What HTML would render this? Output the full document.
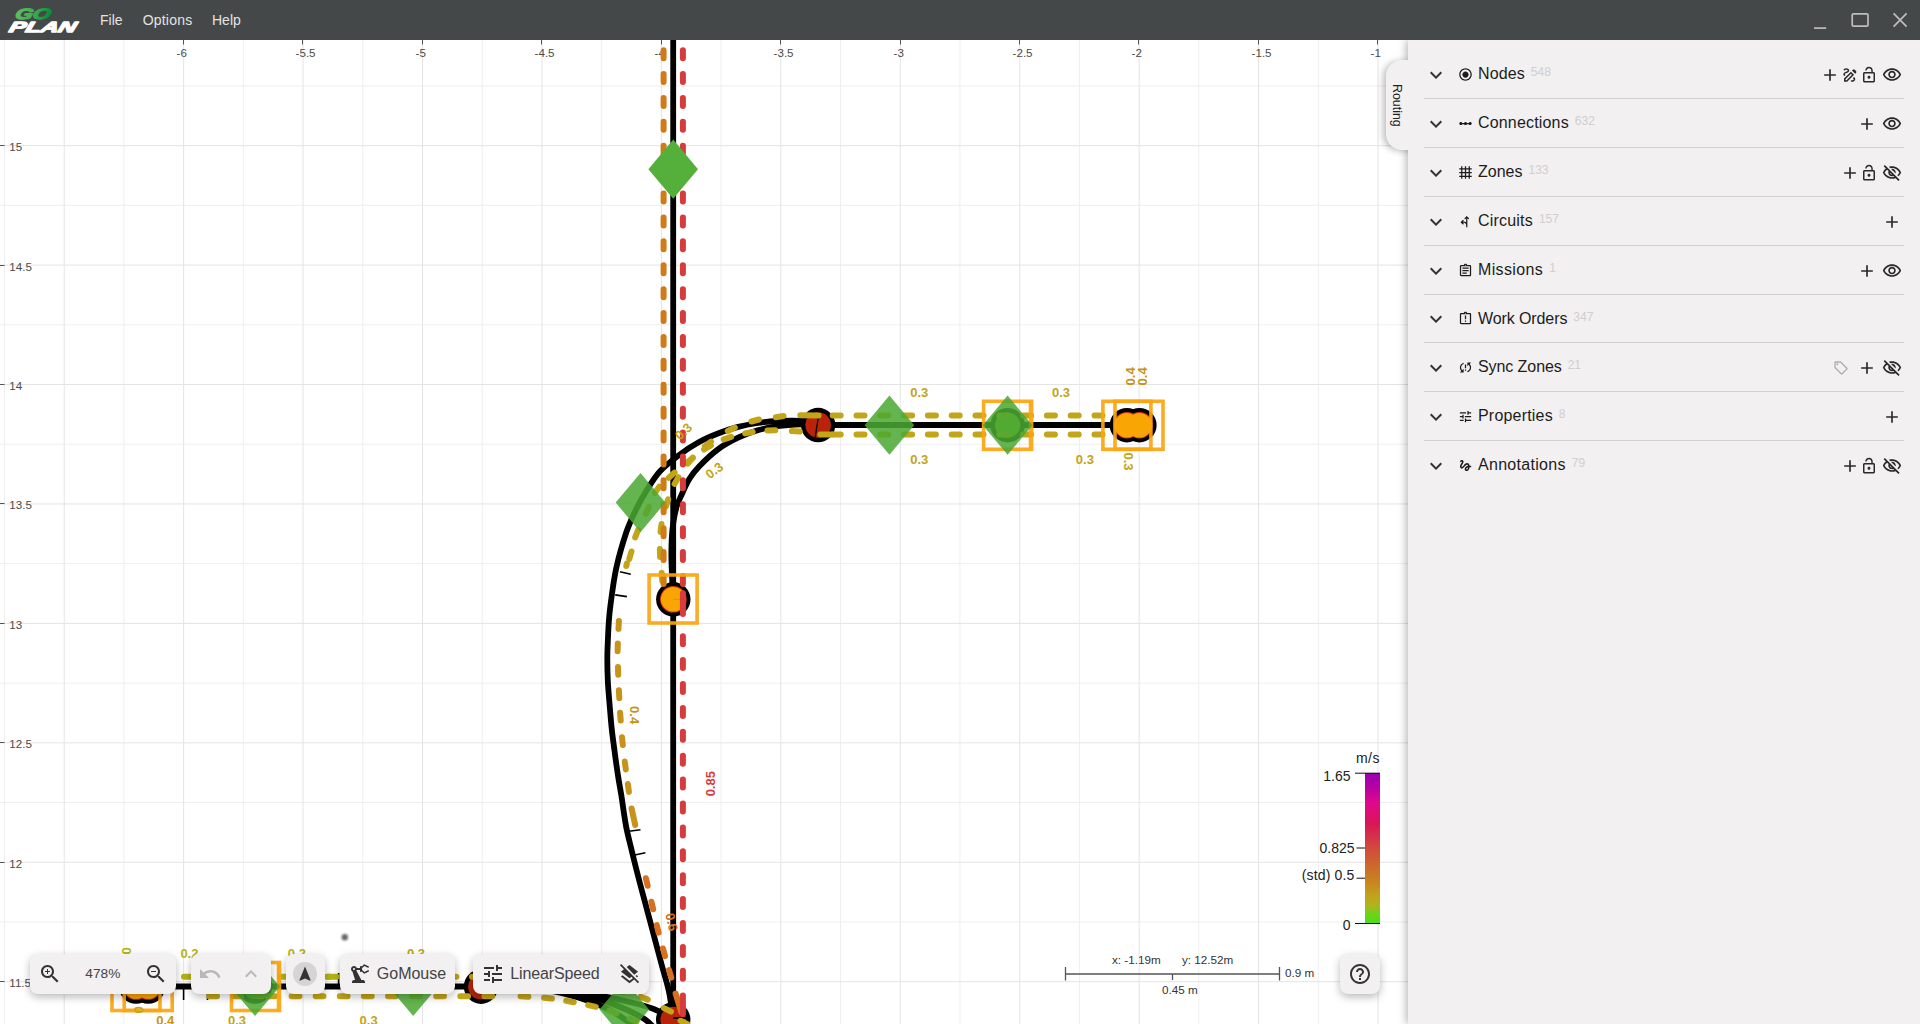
<!DOCTYPE html>
<html lang="en">
<head>
<meta charset="utf-8">
<title>GoPlan</title>
<style>
*{box-sizing:border-box;margin:0;padding:0}
html,body{width:1920px;height:1024px;overflow:hidden;background:#fff;font-family:"Liberation Sans",sans-serif;}
#titlebar{position:absolute;left:0;top:0;width:1920px;height:40px;background:#444849;z-index:20}
#titlebar .menu{position:absolute;top:0;height:40px;line-height:40px;color:#e3e3e3;font-size:14px}
#logo{position:absolute;left:0;top:0;width:90px;height:40px}
#canvas{position:absolute;left:0;top:40px;width:1408px;height:984px;overflow:hidden;background:#fff}
#canvas svg{position:absolute;left:0;top:-40px}
#panel{position:absolute;left:1408px;top:40px;width:512px;height:984px;background:#f2f0f1;box-shadow:-2px 0 8px rgba(0,0,0,.28);z-index:10}
#tabwrap{position:absolute;left:1366px;top:40px;width:42px;height:130px;overflow:hidden;z-index:12;clip-path:inset(0 0 0 0)}
#tab{position:absolute;left:20px;top:20px;width:30px;height:90px;background:#f2f0f1;border-radius:16px 0 0 16px;box-shadow:-3px 1px 6px rgba(0,0,0,.25)}
#tab span{position:absolute;left:-0.5px;top:20px;width:22px;height:50px;writing-mode:vertical-rl;font-size:12.4px;color:#222;line-height:22px;text-align:center}
.row{position:absolute;left:16px;width:480px;height:49px;border-bottom:1px solid #d2d0d1}
.row .t{position:absolute;left:54px;top:0;font-size:16px;line-height:48px;color:#1c1c1c;white-space:nowrap}
.row .t sup{font-size:12px;color:#d0cecf;margin-left:6px;vertical-align:baseline;position:relative;top:-3px;letter-spacing:0}
.row svg{position:absolute}
.pill{position:absolute;top:954px;height:40px;background:#f2f0f1;border-radius:8px;box-shadow:0 3px 8px rgba(0,0,0,.28);z-index:8}
.pill span{position:absolute;top:0;line-height:40px;font-size:16px;color:#444;white-space:nowrap}
.pill svg{position:absolute}
</style>
</head>
<body>
<div id="canvas">
<svg id="map" width="1408" height="1024" viewBox="0 0 1408 1024">
<g id="grid"><path d="M4.47 40V1024M123.91 40V1024M243.34 40V1024M362.78 40V1024M482.22 40V1024M601.66 40V1024M721.09 40V1024M840.53 40V1024M959.97 40V1024M1079.41 40V1024M1198.84 40V1024M1318.28 40V1024M0 85.93H1408M0 205.37H1408M0 324.81H1408M0 444.24H1408M0 563.68H1408M0 683.12H1408M0 802.56H1408M0 921.99H1408" stroke="#efefef" stroke-width="1" fill="none"/>
<path d="M64.19 40V1024M183.62 40V1024M303.06 40V1024M422.5 40V1024M541.94 40V1024M661.38 40V1024M780.81 40V1024M900.25 40V1024M1019.69 40V1024M1139.12 40V1024M1258.56 40V1024M1378.0 40V1024M0 145.65H1408M0 265.09H1408M0 384.52H1408M0 503.96H1408M0 623.4H1408M0 742.84H1408M0 862.27H1408M0 981.71H1408" stroke="#e4e4e4" stroke-width="1" fill="none"/></g>
<g id="axes"><path d="M183.5 40V44.5M302.5 40V44.5M422.5 40V44.5M541.5 40V44.5M661.5 40V44.5M780.5 40V44.5M900.5 40V44.5M1019.5 40V44.5M1138.5 40V44.5M1258.5 40V44.5M1377.5 40V44.5M0 145.5H4.5M0 265.5H4.5M0 384.5H4.5M0 503.5H4.5M0 623.5H4.5M0 742.5H4.5M0 862.5H4.5M0 981.5H4.5" stroke="#555" stroke-width="1" fill="none"/>
<g font-family="&quot;Liberation Sans&quot;,sans-serif" font-size="11.6" fill="#4a4a4a"><text x="176.6" y="56.8">-6</text><text x="295.6" y="56.8">-5.5</text><text x="415.6" y="56.8">-5</text><text x="534.6" y="56.8">-4.5</text><text x="654.6" y="56.8">-4</text><text x="773.6" y="56.8">-3.5</text><text x="893.6" y="56.8">-3</text><text x="1012.6" y="56.8">-2.5</text><text x="1131.6" y="56.8">-2</text><text x="1251.6" y="56.8">-1.5</text><text x="1370.6" y="56.8">-1</text><text x="9.3" y="150.7">15</text><text x="9.3" y="270.7">14.5</text><text x="9.3" y="389.7">14</text><text x="9.3" y="508.7">13.5</text><text x="9.3" y="628.7">13</text><text x="9.3" y="747.7">12.5</text><text x="9.3" y="867.7">12</text><text x="9.3" y="986.7">11.5</text></g></g>
<g id="routes"><g fill="none" stroke="#000" stroke-width="5.8" stroke-linecap="round" stroke-linejoin="round">
<path d="M673.2 30V1019"/>
<path d="M818 425H1128"/>
<path d="M818.1 425.1C815.4 424.4 808.4 421.7 801.6 421.0C794.8 420.3 784.5 420.7 777.2 421.0C769.9 421.3 764.2 422.0 757.7 423.0C751.2 424.0 744.6 425.2 738.1 426.9C731.6 428.6 725.1 430.7 718.6 433.2C712.1 435.7 705.6 438.4 699.1 442.0C692.6 445.6 686.0 449.8 679.5 454.7C673.0 459.6 665.5 465.3 660.0 471.3C654.5 477.3 650.3 484.6 646.4 490.8C642.5 497.0 639.7 502.2 636.6 508.4C633.5 514.6 630.5 521.1 627.9 527.9C625.3 534.7 623.0 542.6 621.0 549.4C619.0 556.2 617.6 561.8 616.1 568.9C614.6 576.0 613.3 584.5 612.2 592.3C611.1 600.1 610.0 607.9 609.3 615.8C608.6 623.7 608.2 632.3 607.9 639.5C607.6 646.7 607.3 651.8 607.3 659.0C607.3 666.2 607.5 674.7 607.9 682.5C608.3 690.3 609.1 698.1 609.7 705.9C610.4 713.7 610.9 721.6 611.8 729.4C612.6 737.2 613.8 745.0 614.8 752.8C615.8 760.6 617.0 769.1 618.1 776.2C619.2 783.4 620.1 787.6 621.4 795.8C622.7 804.0 624.2 816.2 625.9 825.4C627.6 834.6 629.7 842.0 631.8 850.8C633.9 859.6 636.2 868.7 638.6 878.1C641.0 887.5 643.8 897.6 646.4 907.4C649.0 917.2 651.6 926.9 654.2 936.7C656.8 946.5 659.5 956.9 662.0 966.0C664.5 975.1 667.0 982.5 668.9 991.4C670.8 1000.3 672.5 1014.8 673.2 1019.5"/>
<path d="M818.1 425.1C815.4 424.9 808.4 424.2 801.6 424.4C794.8 424.6 784.5 425.2 777.2 426.2C769.9 427.2 764.2 428.4 757.7 430.3C751.2 432.2 744.6 434.5 738.1 437.6C731.6 440.7 725.1 444.0 718.6 448.8C712.1 453.6 704.0 461.3 699.1 466.4C694.2 471.4 692.2 474.3 689.3 479.1C686.4 483.9 683.6 490.4 681.5 495.0C679.4 499.6 678.1 501.9 676.7 506.4C675.4 510.9 674.2 516.8 673.4 522.0C672.6 527.2 672.1 531.8 671.8 537.7C671.5 543.6 671.3 550.2 671.4 557.2C671.5 564.2 671.9 573.0 672.2 580.0C672.5 587.0 673.1 596.1 673.3 599.3"/>
<path d="M136 986.5H520C560 987 590 993 625 1001S660 1012 673 1019.5"/>
<path d="M520 986.5C565 988 600 998 625 1009S650 1024 660 1034"/>
<path d="M520 986.5C560 989 600 1003 620 1016S632 1030 640 1040"/>
</g>
<path d="M620 571.8L630.8 574.2M615.2 594.9L626.9 596.6M628.8 831.25L640.5 829.7M633.7 855.3L645.4 852.7M183.6 986V1000M207.5 986V1000M338.6 973V987" stroke="#000" stroke-width="1.6" fill="none"/>
<circle cx="818.15" cy="425.05" r="17.2" fill="#000"/><circle cx="818.15" cy="425.05" r="12.8" fill="#b9230a"/><path d="M819.2 411.5L815 438.5" stroke="#000" stroke-width="1.3"/>
<circle cx="1126.9" cy="425.2" r="17.2" fill="#000"/><circle cx="1139.4" cy="425.2" r="17.2" fill="#000"/><circle cx="1126.9" cy="425.2" r="13.3" fill="#e0360c"/><circle cx="1139.4" cy="425.2" r="13.3" fill="#e0360c"/><circle cx="1126.9" cy="425.2" r="12.3" fill="#f9a504"/><circle cx="1139.4" cy="425.2" r="12.3" fill="#f9a504"/>
<circle cx="673.3" cy="599.3" r="17.2" fill="#000"/><circle cx="673.3" cy="599.3" r="13.3" fill="#e0360c"/><circle cx="673.3" cy="599.3" r="12.3" fill="#f9a504"/><path d="M673.5 599.3H684" stroke="#d9961e" stroke-width="1.2"/>
<circle cx="673.2" cy="1019.5" r="17.2" fill="#000"/><circle cx="673.2" cy="1019.5" r="12.8" fill="#b9230a"/><path d="M673.3 1018H686.5" stroke="#000" stroke-width="2"/>
<circle cx="481" cy="986.7" r="17.2" fill="#000"/><circle cx="481" cy="986.7" r="12.8" fill="#b9230a"/>
<circle cx="136" cy="986.5" r="17.2" fill="#000"/><circle cx="148.2" cy="986.5" r="17.2" fill="#000"/><circle cx="136" cy="986.5" r="13.3" fill="#e0360c"/><circle cx="148.2" cy="986.5" r="13.3" fill="#e0360c"/><circle cx="136" cy="986.5" r="12.3" fill="#f9a504"/><circle cx="148.2" cy="986.5" r="12.3" fill="#f9a504"/>
<circle cx="1007.6" cy="425.2" r="17.2" fill="#000"/><circle cx="1007.6" cy="425.2" r="12.6" fill="#78bd3c"/>
<circle cx="255" cy="986.5" r="17.2" fill="#000"/><circle cx="255" cy="986.5" r="12.6" fill="#78bd3c"/>
<path d="M783.6 416.0L775.8 417.2M759.0 419.5L751.4 421.5M734.8 427.6L727.8 431.0M711.0 441.6L704.8 446.4M692.8 457.6L687.8 463.6M678.4 477.1L674.6 483.9M668.2 499.3L665.8 506.7M661.5 524.1L660.5 531.9M659.9 549.1L660.1 556.9M661.7 573.1L662.3 580.9" stroke="#c2a518" stroke-width="6" stroke-linecap="round" fill="none"/>
<path d="M799.7 431.5L791.9 431.1M775.3 430.2L767.5 430.4M752.7 432.0L745.1 433.4M731.1 436.8L723.7 439.4M710.9 445.5L704.1 449.5M692.6 458.1L686.4 462.9M674.6 472.6L668.8 477.8M659.3 486.6L654.9 493.0M649.0 506.8L645.8 513.8M638.0 530.1L635.2 537.4M631.5 551.5L629.3 558.9" stroke="#c2a518" stroke-width="6" stroke-linecap="round" fill="none"/>
<path d="M618.9 621.0L618.5 628.8M617.8 643.4L617.6 651.2M618.0 666.9L618.2 674.7M618.9 690.3L619.3 698.1M620.1 712.8L620.7 720.6M622.0 737.2L622.8 745.0M624.8 761.6L625.8 769.4M627.9 784.1L628.9 791.9" stroke="#c8931a" stroke-width="6" stroke-linecap="round" fill="none"/>
<path d="M631.6 808.5L635.2 825" stroke="#c8931a" stroke-width="6" stroke-linecap="round" fill="none"/>
<path d="M626.3 566L626.9 563.5" stroke="#c2a518" stroke-width="6" stroke-linecap="round" fill="none"/>
<path d="M645.9 878.2L647.7 885.8M651.4 901.7L653.2 909.3M656.8 925.1L658.6 932.7M663.0 948.5L665.0 956.1M669.1 970.1L671.3 977.5" stroke="#d8701f" stroke-width="6" stroke-linecap="round" fill="none"/>
<path d="M675.6 993.5L681.3 1012" stroke="#d8701f" stroke-width="6" stroke-linecap="round" fill="none"/>
<path d="M520.6 996.2L528.4 996.8M544.1 997.8L551.9 998.6M566.2 1000.9L573.8 1002.3M588.2 1005.1L595.8 1006.9M609.3 1010.7L616.7 1013.3M629.4 1018.6L636.6 1021.4" stroke="#c2a518" stroke-width="6" stroke-linecap="round" fill="none"/>
<path d="M544.1 977.5L551.9 978.5M568.1 980.4L575.9 981.6M592.2 984.7L599.8 986.3M616.2 990.0L623.8 992.0M640.6 996.8L647.8 999.6M664.0 1008.1L671.0 1011.7" stroke="#c2a518" stroke-width="6" stroke-linecap="round" fill="none"/>
<path d="M680.5 1020.8L687.5 1024.2M696.5 1028.3L703.5 1031.7" stroke="#c2a518" stroke-width="6" stroke-linecap="round" fill="none"/>
<g fill="none" stroke-width="6" stroke-linecap="round">
<path d="M663.6 26.25V588" stroke="#cf7c18" stroke-dasharray="8 15.9"/>
<path d="M682.9 26.25V585" stroke="#d63c3c" stroke-dasharray="8 15.9"/>
<path d="M682.9 593.2V614" stroke="#d63c3c"/>
<path d="M682.9 636.2V985" stroke="#d63c3c" stroke-dasharray="8 15.9"/>
<path d="M682.9 995.6V1014" stroke="#d63c3c"/>
<path d="M832.7 415.6H1104" stroke="#c2a518" stroke-dasharray="8 15.8"/>
<path d="M832.7 434.5H1104" stroke="#c2a518" stroke-dasharray="8 15.8"/>
<path d="M820.3 434.4H832" stroke="#c2a518"/>
<path d="M800.3 415.2L818.6 415.4" stroke="#c2a518"/>
<path d="M184 976.8H330" stroke="#b4b414" stroke-dasharray="8.4 15.6"/>
<path d="M326.8 976.8H420" stroke="#b4b414" stroke-dasharray="9.8 14.2"/>
<path d="M424 976.8H520" stroke="#c2a518" stroke-dasharray="8.4 15.6"/>
<path d="M209.2 996.2H262" stroke="#c2a518" stroke-dasharray="7.8 16.4"/>
<path d="M267.5 996.2H497" stroke="#c2a518" stroke-dasharray="7.8 16.3"/>
</g>
<defs><filter id="blur1" x="-1" y="-1" width="3" height="3"><feGaussianBlur stdDeviation="1"/></filter></defs>
<rect x="983.6" y="401.3" width="48.0" height="48.0" fill="none" stroke="#fca50f" stroke-opacity="0.92" stroke-width="3.6"/><path d="M1029.6 401V449.5" stroke="#fca50f" stroke-opacity=".9" stroke-width="1.8"/>
<rect x="1102.9" y="401.3" width="48.0" height="48.0" fill="none" stroke="#fca50f" stroke-opacity="0.92" stroke-width="3.6"/><rect x="1115.0" y="401.3" width="48.0" height="48.0" fill="none" stroke="#fca50f" stroke-opacity="0.92" stroke-width="3.6"/>
<rect x="649.1" y="575.0" width="48.0" height="48.0" fill="none" stroke="#fca50f" stroke-opacity="0.92" stroke-width="3.6"/>
<rect x="112.0" y="962.5" width="48.0" height="48.0" fill="none" stroke="#fca50f" stroke-opacity="0.92" stroke-width="3.6"/><rect x="124.2" y="962.5" width="48.0" height="48.0" fill="none" stroke="#fca50f" stroke-opacity="0.92" stroke-width="3.6"/>
<rect x="231.5" y="962.5" width="48.0" height="48.0" fill="none" stroke="#fca50f" stroke-opacity="0.92" stroke-width="3.6"/><path d="M277.6 962V1011" stroke="#fca50f" stroke-opacity=".9" stroke-width="1.8"/>
<path d="M673.2 139.6L698 169.2L673.2 198.8L648.4 169.2Z" fill="#54af3b"/>
<path d="M889.4 395.59999999999997L914.1999999999999 425.2L889.4 454.8L864.6 425.2Z" fill="#4aa832" fill-opacity="0.86"/>
<path d="M1007.6 395.59999999999997L1032.4 425.2L1007.6 454.8L982.8000000000001 425.2Z" fill="#4aa832" fill-opacity="0.86"/>
<path d="M640.5 473.0L665.3 502.6L640.5 532.2L615.7 502.6Z" fill="#4aa832" fill-opacity="0.86"/>
<path d="M255 956.9L279.8 986.5L255 1016.1L230.2 986.5Z" fill="#4aa832" fill-opacity="0.86"/>
<path d="M413.2 956.9L438.0 986.5L413.2 1016.1L388.4 986.5Z" fill="#4aa832" fill-opacity="0.86"/>
<path d="M624.3 980.0L649.0999999999999 1009.6L624.3 1039.2L599.5 1009.6Z" fill="#4aa832" fill-opacity="0.86"/>
<g font-family="&quot;Liberation Sans&quot;,sans-serif" font-size="13" font-weight="bold"><text x="910.2" y="397.3" fill="#c2a518" text-anchor="start">0.3</text><text x="910.2" y="464" fill="#c2a518" text-anchor="start">0.3</text><text x="1052" y="396.6" fill="#c2a518" text-anchor="start">0.3</text><text x="1075.8" y="463.6" fill="#c2a518" text-anchor="start">0.3</text><text transform="translate(1134.6 376.4) rotate(-90)" fill="#c8931a" text-anchor="middle">0.4</text><text transform="translate(1146.6 376.4) rotate(-90)" fill="#c8931a" text-anchor="middle">0.4</text><text transform="translate(1123.9 461.5) rotate(90)" fill="#c2a518" text-anchor="middle">0.3</text><text transform="translate(629.7 715.1) rotate(90)" fill="#c8931a" text-anchor="middle">0.4</text><text transform="translate(714.5 783.7) rotate(-90)" fill="#d63c3c" text-anchor="middle">0.85</text><text transform="translate(667.3 923) rotate(77)" fill="#d8701f" text-anchor="middle">0.6</text><text transform="translate(686.5 434.7) rotate(-43)" fill="#c2a518" text-anchor="middle">0.3</text><text transform="translate(717 474) rotate(-37)" fill="#c2a518" text-anchor="middle">0.3</text><text transform="translate(130.6 951) rotate(-90)" fill="#b4b810" text-anchor="middle">0</text><text x="180.4" y="957.5" fill="#b4b414" text-anchor="start">0.2</text><text x="287.8" y="957.5" fill="#b4b414" text-anchor="start">0.2</text><text x="407" y="957.5" fill="#c2a518" text-anchor="start">0.3</text><text x="156.2" y="1025.2" fill="#c8931a" text-anchor="start">0.4</text><text x="228" y="1025.2" fill="#c2a518" text-anchor="start">0.3</text><text x="359.6" y="1025.2" fill="#c2a518" text-anchor="start">0.3</text><text transform="translate(133.8 1009.9) rotate(90)" fill="#c2a518" text-anchor="middle">0</text></g>
<circle cx="344.8" cy="937.3" r="3.2" fill="#555" fill-opacity="0.9" filter="url(#blur1)"/></g>
<g id="legend"><defs><linearGradient id="spd" x1="0" y1="0" x2="0" y2="1">
<stop offset="0" stop-color="#9a00b4"/><stop offset="0.08" stop-color="#b200a6"/><stop offset="0.2" stop-color="#e0088c"/><stop offset="0.33" stop-color="#da1458"/><stop offset="0.5" stop-color="#d04a3c"/><stop offset="0.62" stop-color="#cc6a2a"/><stop offset="0.72" stop-color="#c88420"/><stop offset="0.82" stop-color="#c0a41c"/><stop offset="0.88" stop-color="#b0b41c"/><stop offset="0.94" stop-color="#6cd418"/><stop offset="1" stop-color="#4ce010"/></linearGradient></defs>
<rect x="1365" y="773" width="15" height="150.5" fill="url(#spd)"/>
<path d="M1355 773.2H1380M1355 923.5H1380M1356.5 848H1365M1356.5 878.2H1365" stroke="#111" stroke-width="1" fill="none"/>
<g font-family="&quot;Liberation Sans&quot;,sans-serif" font-size="14" fill="#222" text-anchor="end">
<text x="1380" y="763" letter-spacing="0.5">m/s</text>
<text x="1350.5" y="781">1.65</text>
<text x="1354.5" y="852.5">0.825</text>
<text x="1354.5" y="879.5" letter-spacing="0.15">(std) 0.5</text>
<text x="1350.5" y="930">0</text>
</g>
<path d="M1065 974H1280M1065.5 967V980.5M1279.5 967V980.5M1172.5 974V980" stroke="#555" stroke-width="1.3" fill="none"/>
<g font-family="&quot;Liberation Sans&quot;,sans-serif" font-size="11.7" fill="#333">
<text x="1112" y="964">x: -1.19m</text>
<text x="1182" y="964">y: 12.52m</text>
<text x="1285" y="977">0.9 m</text>
<text x="1162" y="994">0.45 m</text>
</g>
</g>
</svg>
</div>

<div id="titlebar">
<svg id="logo" viewBox="0 0 90 40"><defs><linearGradient id="gg" x1="0" y1="0" x2="1" y2="0"><stop offset="0" stop-color="#63be5d"/><stop offset="0.5" stop-color="#3fae50"/><stop offset="1" stop-color="#0a8a3b"/></linearGradient></defs>
<g font-family="&quot;Liberation Sans&quot;,sans-serif" font-weight="bold" font-style="italic">
<text transform="translate(14.2 18.5) scale(1.52 1) skewX(-10)" font-size="15" fill="url(#gg)" stroke="url(#gg)" stroke-width="1.1" stroke-linejoin="round">GO</text>
<text transform="translate(8.3 31.6) scale(1.68 1) skewX(-10)" font-size="14.6" fill="#fff" stroke="#fff" stroke-width="1.3" stroke-linejoin="round">PLAN</text>
</g>
</svg>
<div class="menu" style="left:100px">File</div>
<div class="menu" style="left:142.7px;letter-spacing:0.2px">Options</div>
<div class="menu" style="left:212px">Help</div>
<svg id="winctl" style="position:absolute;left:1800px;top:0" width="120" height="40" viewBox="0 0 120 40" fill="none" stroke="#bdbdbd" stroke-width="1.7">
<path d="M14 28.1H26.2"/>
<rect x="52.2" y="13.9" width="15.8" height="12.2" rx="1.2"/>
<path d="M93.6 13.4L106.6 26.6M106.6 13.4L93.6 26.6"/>
</svg>
</div>

<div id="tabwrap"><div id="tab"><span>Routing</span></div></div>
<div id="panel"><div class="row" style="top:10px;height:49px"><svg style="left:0.1px;top:12.9px" width="24" height="24" viewBox="0 0 24 24" fill="#333"><path d="M16.59 8.59L12 13.17 7.41 8.59 6 10l6 6 6-6z"/></svg><svg style="left:34.0px;top:16.5px" width="15" height="15" viewBox="0 0 24 24" fill="#1c1c1c"><path d="M12 7c-2.76 0-5 2.24-5 5s2.24 5 5 5 5-2.24 5-5-2.24-5-5-5zm0-5C6.48 2 2 6.48 2 12s4.48 10 10 10 10-4.48 10-10S17.52 2 12 2zm0 18c-4.42 0-8-3.58-8-8s3.58-8 8-8 8 3.58 8 8-3.58 8-8 8z"/></svg><div class="t" style="line-height:48px;letter-spacing:0.11px">Nodes<sup>548</sup></div><svg style="left:396.0px;top:14.9px" width="20" height="20" viewBox="0 0 24 24" fill="#2a2a2a"><path d="M19 13h-6v6h-2v-6H5v-2h6V5h2v6h6v2z"/></svg><svg style="left:416.6px;top:15.9px" width="18" height="18" viewBox="0 0 24 24" fill="#2a2a2a"><path d="M18.85 10.39l1.06-1.06c.78-.78.78-2.05 0-2.83L18.5 5.09c-.78-.78-2.05-.78-2.83 0l-1.06 1.06 4.24 4.24zm-4.24 1.41L7.41 19H6v-1.41l7.19-7.19 1.42 1.4zm-1.42-4.24L4 16.76V21h4.24l9.19-9.19-4.24-4.25zM19 17.5c0 2.19-2.54 3.5-5 3.5-.55 0-1-.45-1-1s.45-1 1-1c1.54 0 3-.73 3-1.5 0-.47-.48-.87-1.23-1.2l1.48-1.48c1.07.63 1.75 1.47 1.75 2.68zM4.58 13.35C3.61 12.79 3 12.06 3 11c0-1.8 1.89-2.63 3.56-3.36C7.59 7.18 9 6.56 9 6c0-.41-.78-1-2-1-1.26 0-1.8.61-1.83.64-.35.41-.98.46-1.4.12-.41-.34-.49-.95-.15-1.38C3.73 4.24 4.76 3 7 3s4 1.32 4 3c0 1.87-1.93 2.72-3.64 3.47C6.42 9.88 5 10.5 5 11c0 .31.43.6 1.07.86l-1.49 1.49z"/></svg><svg style="left:436.3px;top:15.9px" width="18" height="18" viewBox="0 0 24 24" fill="#2a2a2a"><path d="M12 17c1.1 0 2-.9 2-2s-.9-2-2-2-2 .9-2 2 .9 2 2 2zm6-9h-1V6c0-2.76-2.24-5-5-5S7 3.24 7 6h1.9c0-1.71 1.39-3.1 3.1-3.1 1.71 0 3.1 1.39 3.1 3.1v2H6c-1.1 0-2 .9-2 2v10c0 1.1.9 2 2 2h12c1.1 0 2-.9 2-2V10c0-1.1-.9-2-2-2zm0 12H6V10h12v10z"/></svg><svg style="left:458.0px;top:14.9px" width="20" height="20" viewBox="0 0 24 24" fill="#2a2a2a"><path d="M12 6c3.79 0 7.17 2.13 8.82 5.5C19.17 14.87 15.79 17 12 17s-7.17-2.13-8.82-5.5C4.83 8.13 8.21 6 12 6m0-2C7 4 2.73 7.11 1 11.5 2.73 15.89 7 19 12 19s9.27-3.11 11-7.5C21.27 7.11 17 4 12 4zm0 5c1.38 0 2.5 1.12 2.5 2.5S13.38 14 12 14s-2.5-1.12-2.5-2.5S10.62 9 12 9m0-2c-2.48 0-4.5 2.02-4.5 4.5S9.52 16 12 16s4.5-2.02 4.5-4.5S14.48 7 12 7z"/></svg></div>
<div class="row" style="top:59px;height:49px"><svg style="left:0.1px;top:12.9px" width="24" height="24" viewBox="0 0 24 24" fill="#333"><path d="M16.59 8.59L12 13.17 7.41 8.59 6 10l6 6 6-6z"/></svg><svg style="left:34.0px;top:16.5px" width="15" height="15" viewBox="0 0 24 24" fill="#1c1c1c"><path d="M19.5 9.5c-1.03 0-1.9.62-2.29 1.5h-2.92c-.39-.88-1.26-1.5-2.29-1.5s-1.9.62-2.29 1.5H6.79c-.39-.88-1.26-1.5-2.29-1.5C3.12 9.5 2 10.62 2 12s1.12 2.5 2.5 2.5c1.03 0 1.9-.62 2.29-1.5h2.92c.39.88 1.26 1.5 2.29 1.5s1.9-.62 2.29-1.5h2.92c.39.88 1.26 1.5 2.29 1.5 1.38 0 2.5-1.12 2.5-2.5s-1.12-2.5-2.5-2.5z"/></svg><div class="t" style="line-height:48px;letter-spacing:0.17px">Connections<sup>632</sup></div><svg style="left:433.0px;top:14.9px" width="20" height="20" viewBox="0 0 24 24" fill="#2a2a2a"><path d="M19 13h-6v6h-2v-6H5v-2h6V5h2v6h6v2z"/></svg><svg style="left:458.0px;top:14.9px" width="20" height="20" viewBox="0 0 24 24" fill="#2a2a2a"><path d="M12 6c3.79 0 7.17 2.13 8.82 5.5C19.17 14.87 15.79 17 12 17s-7.17-2.13-8.82-5.5C4.83 8.13 8.21 6 12 6m0-2C7 4 2.73 7.11 1 11.5 2.73 15.89 7 19 12 19s9.27-3.11 11-7.5C21.27 7.11 17 4 12 4zm0 5c1.38 0 2.5 1.12 2.5 2.5S13.38 14 12 14s-2.5-1.12-2.5-2.5S10.62 9 12 9m0-2c-2.48 0-4.5 2.02-4.5 4.5S9.52 16 12 16s4.5-2.02 4.5-4.5S14.48 7 12 7z"/></svg></div>
<div class="row" style="top:108px;height:49px"><svg style="left:0.1px;top:12.9px" width="24" height="24" viewBox="0 0 24 24" fill="#333"><path d="M16.59 8.59L12 13.17 7.41 8.59 6 10l6 6 6-6z"/></svg><svg style="left:34.0px;top:16.5px" width="15" height="15" viewBox="0 0 24 24" fill="#1c1c1c"><path d="M22 7V5h-3V2h-2v3h-4V2h-2v3H7V2H5v3H2v2h3v4H2v2h3v4H2v2h3v3h2v-3h4v3h2v-3h4v3h2v-3h3v-2h-3v-4h3v-2h-3V7h3zM7 7h4v4H7V7zm0 10v-4h4v4H7zm10 0h-4v-4h4v4zm0-6h-4V7h4v4z"/></svg><div class="t" style="line-height:48px;letter-spacing:0px">Zones<sup>133</sup></div><svg style="left:416.0px;top:14.9px" width="20" height="20" viewBox="0 0 24 24" fill="#2a2a2a"><path d="M19 13h-6v6h-2v-6H5v-2h6V5h2v6h6v2z"/></svg><svg style="left:436.3px;top:15.9px" width="18" height="18" viewBox="0 0 24 24" fill="#2a2a2a"><path d="M12 17c1.1 0 2-.9 2-2s-.9-2-2-2-2 .9-2 2 .9 2 2 2zm6-9h-1V6c0-2.76-2.24-5-5-5S7 3.24 7 6h1.9c0-1.71 1.39-3.1 3.1-3.1 1.71 0 3.1 1.39 3.1 3.1v2H6c-1.1 0-2 .9-2 2v10c0 1.1.9 2 2 2h12c1.1 0 2-.9 2-2V10c0-1.1-.9-2-2-2zm0 12H6V10h12v10z"/></svg><svg style="left:458.0px;top:14.9px" width="20" height="20" viewBox="0 0 24 24" fill="#2a2a2a"><path d="M12 6c3.79 0 7.17 2.13 8.82 5.5-.59 1.22-1.42 2.27-2.41 3.12l1.41 1.41c1.39-1.23 2.49-2.77 3.18-4.53C21.27 7.11 17 4 12 4c-1.27 0-2.49.2-3.64.57l1.65 1.65C10.66 6.09 11.32 6 12 6zm-1.07 1.14L13 9.21c.57.25 1.03.71 1.28 1.28l2.07 2.07c.08-.34.14-.7.14-1.07C16.5 9.01 14.48 7 12 7c-.37 0-.72.05-1.07.14zM2.01 3.87l2.68 2.68C3.06 7.83 1.77 9.53 1 11.5 2.73 15.89 7 19 12 19c1.52 0 2.98-.29 4.32-.82l3.42 3.42 1.41-1.41L3.42 2.45 2.01 3.87zm7.5 7.5l2.61 2.61c-.04.01-.08.02-.12.02-1.38 0-2.5-1.12-2.5-2.5 0-.05.01-.08.01-.13zm-3.4-3.4l1.75 1.75c-.23.55-.36 1.15-.36 1.78 0 2.48 2.02 4.5 4.5 4.5.63 0 1.23-.13 1.77-.36l.98.98c-.88.24-1.8.38-2.75.38-3.79 0-7.17-2.13-8.82-5.5.7-1.43 1.72-2.61 2.93-3.53z"/></svg></div>
<div class="row" style="top:157px;height:49px"><svg style="left:0.1px;top:12.9px" width="24" height="24" viewBox="0 0 24 24" fill="#333"><path d="M16.59 8.59L12 13.17 7.41 8.59 6 10l6 6 6-6z"/></svg><svg style="left:34.0px;top:16.5px" width="15" height="15" viewBox="0 0 24 24" fill="#1c1c1c"><path d="M9.41 15.59L8 17l-4-4 4-4 1.41 1.41L7.83 12c1.51-.33 3.73.08 5.17 1.36V6.83l-1.59 1.59L10 7l4-4 4 4-1.41 1.41L15 6.83V21h-2v-4c-.73-2.58-3.07-3.47-5.17-3l1.58 1.59z"/></svg><div class="t" style="line-height:48px;letter-spacing:0.2px">Circuits<sup>157</sup></div><svg style="left:458.0px;top:14.9px" width="20" height="20" viewBox="0 0 24 24" fill="#2a2a2a"><path d="M19 13h-6v6h-2v-6H5v-2h6V5h2v6h6v2z"/></svg></div>
<div class="row" style="top:206px;height:49px"><svg style="left:0.1px;top:12.9px" width="24" height="24" viewBox="0 0 24 24" fill="#333"><path d="M16.59 8.59L12 13.17 7.41 8.59 6 10l6 6 6-6z"/></svg><svg style="left:34.0px;top:16.5px" width="15" height="15" viewBox="0 0 24 24" fill="#1c1c1c"><path d="M7 15h7v2H7zm0-4h10v2H7zm0-4h10v2H7zm12-4h-4.18C14.4 1.84 13.3 1 12 1c-1.3 0-2.4.84-2.82 2H5c-.14 0-.27.01-.4.04-.39.08-.74.28-1.01.55-.18.18-.33.4-.43.64-.1.23-.16.49-.16.77v14c0 .27.06.54.16.78s.25.45.43.64c.27.27.62.47 1.01.55.13.02.26.03.4.03h14c1.1 0 2-.9 2-2V5c0-1.1-.9-2-2-2zm-7-.25c.41 0 .75.34.75.75s-.34.75-.75.75-.75-.34-.75-.75.34-.75.75-.75zM19 19H5V5h14v14z"/></svg><div class="t" style="line-height:48px;letter-spacing:0.37px">Missions<sup>1</sup></div><svg style="left:433.0px;top:14.9px" width="20" height="20" viewBox="0 0 24 24" fill="#2a2a2a"><path d="M19 13h-6v6h-2v-6H5v-2h6V5h2v6h6v2z"/></svg><svg style="left:458.0px;top:14.9px" width="20" height="20" viewBox="0 0 24 24" fill="#2a2a2a"><path d="M12 6c3.79 0 7.17 2.13 8.82 5.5C19.17 14.87 15.79 17 12 17s-7.17-2.13-8.82-5.5C4.83 8.13 8.21 6 12 6m0-2C7 4 2.73 7.11 1 11.5 2.73 15.89 7 19 12 19s9.27-3.11 11-7.5C21.27 7.11 17 4 12 4zm0 5c1.38 0 2.5 1.12 2.5 2.5S13.38 14 12 14s-2.5-1.12-2.5-2.5S10.62 9 12 9m0-2c-2.48 0-4.5 2.02-4.5 4.5S9.52 16 12 16s4.5-2.02 4.5-4.5S14.48 7 12 7z"/></svg></div>
<div class="row" style="top:255px;height:48px"><svg style="left:0.1px;top:12.4px" width="24" height="24" viewBox="0 0 24 24" fill="#333"><path d="M16.59 8.59L12 13.17 7.41 8.59 6 10l6 6 6-6z"/></svg><svg style="left:34.0px;top:16.0px" width="15" height="15" viewBox="0 0 24 24" fill="#1c1c1c"><path d="M11 15h2v2h-2v-2zm0-8h2v6h-2V7zm8-4h-4.18C14.4 1.84 13.3 1 12 1c-1.3 0-2.4.84-2.82 2H5c-.14 0-.27.01-.4.04-.39.08-.74.28-1.01.55-.18.18-.33.4-.43.64-.1.23-.16.49-.16.77v14c0 .27.06.54.16.78s.25.45.43.64c.27.27.62.47 1.01.55.13.02.26.03.4.03h14c1.1 0 2-.9 2-2V5c0-1.1-.9-2-2-2zm-7-.25c.41 0 .75.34.75.75s-.34.75-.75.75-.75-.34-.75-.75.34-.75.75-.75zM19 19H5V5h14v14z"/></svg><div class="t" style="line-height:47px;letter-spacing:-0.1px">Work Orders<sup>347</sup></div></div>
<div class="row" style="top:303px;height:49px"><svg style="left:0.1px;top:12.9px" width="24" height="24" viewBox="0 0 24 24" fill="#333"><path d="M16.59 8.59L12 13.17 7.41 8.59 6 10l6 6 6-6z"/></svg><svg style="left:34.0px;top:16.5px" width="15" height="15" viewBox="0 0 24 24" fill="#1c1c1c"><path d="M3 12c0 2.21.91 4.2 2.36 5.64L3 20h6v-6l-2.24 2.24C5.68 15.15 5 13.66 5 12c0-2.61 1.67-4.83 4-5.65V4.26C5.55 5.15 3 8.27 3 12zm8 5h2v-2h-2v2zM21 4h-6v6l2.24-2.24C18.32 8.85 19 10.34 19 12c0 2.61-1.67 4.83-4 5.65v2.09c3.45-.89 6-4.01 6-7.74 0-2.21-.91-4.2-2.36-5.64L21 4zm-10 9h2V7h-2v6z"/></svg><div class="t" style="line-height:48px;letter-spacing:-0.08px">Sync Zones<sup>21</sup></div><svg style="left:409.1px;top:16.9px" width="16" height="16" viewBox="0 0 24 24" fill="#aeacad"><path d="M21.41 11.58l-9-9C12.05 2.22 11.55 2 11 2H4c-1.1 0-2 .9-2 2v7c0 .55.22 1.05.59 1.42l9 9c.36.36.86.58 1.41.58s1.05-.22 1.41-.59l7-7c.37-.36.59-.86.59-1.41s-.23-1.06-.59-1.42zM13 20.01L4 11V4h7v-.01l9 9-7 7.02zM6.5 5A1.5 1.5 0 1 0 6.5 8 1.5 1.5 0 1 0 6.5 5z"/></svg><svg style="left:433.0px;top:14.9px" width="20" height="20" viewBox="0 0 24 24" fill="#2a2a2a"><path d="M19 13h-6v6h-2v-6H5v-2h6V5h2v6h6v2z"/></svg><svg style="left:458.0px;top:14.9px" width="20" height="20" viewBox="0 0 24 24" fill="#2a2a2a"><path d="M12 6c3.79 0 7.17 2.13 8.82 5.5-.59 1.22-1.42 2.27-2.41 3.12l1.41 1.41c1.39-1.23 2.49-2.77 3.18-4.53C21.27 7.11 17 4 12 4c-1.27 0-2.49.2-3.64.57l1.65 1.65C10.66 6.09 11.32 6 12 6zm-1.07 1.14L13 9.21c.57.25 1.03.71 1.28 1.28l2.07 2.07c.08-.34.14-.7.14-1.07C16.5 9.01 14.48 7 12 7c-.37 0-.72.05-1.07.14zM2.01 3.87l2.68 2.68C3.06 7.83 1.77 9.53 1 11.5 2.73 15.89 7 19 12 19c1.52 0 2.98-.29 4.32-.82l3.42 3.42 1.41-1.41L3.42 2.45 2.01 3.87zm7.5 7.5l2.61 2.61c-.04.01-.08.02-.12.02-1.38 0-2.5-1.12-2.5-2.5 0-.05.01-.08.01-.13zm-3.4-3.4l1.75 1.75c-.23.55-.36 1.15-.36 1.78 0 2.48 2.02 4.5 4.5 4.5.63 0 1.23-.13 1.77-.36l.98.98c-.88.24-1.8.38-2.75.38-3.79 0-7.17-2.13-8.82-5.5.7-1.43 1.72-2.61 2.93-3.53z"/></svg></div>
<div class="row" style="top:352px;height:49px"><svg style="left:0.1px;top:12.9px" width="24" height="24" viewBox="0 0 24 24" fill="#333"><path d="M16.59 8.59L12 13.17 7.41 8.59 6 10l6 6 6-6z"/></svg><svg style="left:34.0px;top:16.5px" width="15" height="15" viewBox="0 0 24 24" fill="#1c1c1c"><path d="M3 17v2h6v-2H3zM3 5v2h10V5H3zm10 16v-2h8v-2h-8v-2h-2v6h2zM7 9v2H3v2h4v2h2V9H7zm14 4v-2H11v2h10zm-6-4h2V7h4V5h-4V3h-2v6z"/></svg><div class="t" style="line-height:48px;letter-spacing:0.19px">Properties<sup>8</sup></div><svg style="left:458.0px;top:14.9px" width="20" height="20" viewBox="0 0 24 24" fill="#2a2a2a"><path d="M19 13h-6v6h-2v-6H5v-2h6V5h2v6h6v2z"/></svg></div>
<div class="row" style="top:401px;height:49px;border-bottom:none"><svg style="left:0.1px;top:12.9px" width="24" height="24" viewBox="0 0 24 24" fill="#333"><path d="M16.59 8.59L12 13.17 7.41 8.59 6 10l6 6 6-6z"/></svg><svg style="left:34.0px;top:16.5px" width="15" height="15" viewBox="0 0 24 24" fill="#1c1c1c"><path d="M4.59 6.89c.7-.71 1.4-1.35 1.71-1.22.5.2 0 1.03-.3 1.52-.25.42-2.86 3.89-2.86 6.31 0 1.28.48 2.34 1.34 2.98.75.56 1.74.73 2.64.46 1.07-.31 1.95-1.4 3.06-2.77 1.21-1.49 2.83-3.44 4.08-3.44 1.63 0 1.65 1.01 1.76 1.79-3.78.64-5.38 3.67-5.38 5.37 0 1.7 1.44 3.09 3.21 3.09 1.63 0 4.29-1.33 4.69-6.1H21v-2.5h-2.47c-.15-1.65-1.09-4.2-4.03-4.2-2.25 0-4.18 1.91-4.94 2.84-.58.73-2.06 2.48-2.29 2.72-.25.3-.68.84-1.11.84-.45 0-.72-.83-.36-1.92.35-1.09 1.4-2.86 1.85-3.52.78-1.14 1.3-1.92 1.3-3.28C8.95 3.69 7.31 3 6.44 3 5.12 3 3.97 4 3.72 4.25c-.36.36-.66.66-.88.93l1.75 1.71zm9.29 11.66c-.31 0-.74-.26-.74-.72 0-.6.73-2.2 2.87-2.76-.3 2.69-1.43 3.48-2.13 3.48z"/></svg><div class="t" style="line-height:48px;letter-spacing:0.3px">Annotations<sup>79</sup></div><svg style="left:416.0px;top:14.9px" width="20" height="20" viewBox="0 0 24 24" fill="#2a2a2a"><path d="M19 13h-6v6h-2v-6H5v-2h6V5h2v6h6v2z"/></svg><svg style="left:436.3px;top:15.9px" width="18" height="18" viewBox="0 0 24 24" fill="#2a2a2a"><path d="M12 17c1.1 0 2-.9 2-2s-.9-2-2-2-2 .9-2 2 .9 2 2 2zm6-9h-1V6c0-2.76-2.24-5-5-5S7 3.24 7 6h1.9c0-1.71 1.39-3.1 3.1-3.1 1.71 0 3.1 1.39 3.1 3.1v2H6c-1.1 0-2 .9-2 2v10c0 1.1.9 2 2 2h12c1.1 0 2-.9 2-2V10c0-1.1-.9-2-2-2zm0 12H6V10h12v10z"/></svg><svg style="left:458.0px;top:14.9px" width="20" height="20" viewBox="0 0 24 24" fill="#2a2a2a"><path d="M12 6c3.79 0 7.17 2.13 8.82 5.5-.59 1.22-1.42 2.27-2.41 3.12l1.41 1.41c1.39-1.23 2.49-2.77 3.18-4.53C21.27 7.11 17 4 12 4c-1.27 0-2.49.2-3.64.57l1.65 1.65C10.66 6.09 11.32 6 12 6zm-1.07 1.14L13 9.21c.57.25 1.03.71 1.28 1.28l2.07 2.07c.08-.34.14-.7.14-1.07C16.5 9.01 14.48 7 12 7c-.37 0-.72.05-1.07.14zM2.01 3.87l2.68 2.68C3.06 7.83 1.77 9.53 1 11.5 2.73 15.89 7 19 12 19c1.52 0 2.98-.29 4.32-.82l3.42 3.42 1.41-1.41L3.42 2.45 2.01 3.87zm7.5 7.5l2.61 2.61c-.04.01-.08.02-.12.02-1.38 0-2.5-1.12-2.5-2.5 0-.05.01-.08.01-.13zm-3.4-3.4l1.75 1.75c-.23.55-.36 1.15-.36 1.78 0 2.48 2.02 4.5 4.5 4.5.63 0 1.23-.13 1.77-.36l.98.98c-.88.24-1.8.38-2.75.38-3.79 0-7.17-2.13-8.82-5.5.7-1.43 1.72-2.61 2.93-3.53z"/></svg></div></div>
<div class="pill" style="left:30px;width:145.5px"><svg style="left:8.0px;top:8.0px" width="24" height="24" viewBox="0 0 24 24" fill="#333"><path d="M15.5 14h-.79l-.28-.27C15.41 12.59 16 11.11 16 9.5 16 5.91 13.09 3 9.5 3S3 5.91 3 9.5 5.91 16 9.5 16c1.61 0 3.09-.59 4.23-1.57l.27.28v.79l5 4.99L20.49 19l-4.99-5zm-6 0C7.01 14 5 11.99 5 9.5S7.01 5 9.5 5 14 7.01 14 9.5 11.99 14 9.5 14zm.5-7H9v2H7v1h2v2h1v-2h2V9h-2z"/></svg><span style="left:55.3px;font-size:13.7px">478%</span><svg style="left:114.0px;top:8.0px" width="24" height="24" viewBox="0 0 24 24" fill="#333"><path d="M15.5 14h-.79l-.28-.27C15.41 12.59 16 11.11 16 9.5 16 5.91 13.09 3 9.5 3S3 5.91 3 9.5 5.91 16 9.5 16c1.61 0 3.09-.59 4.23-1.57l.27.28v.79l5 4.99L20.49 19l-4.99-5zm-6 0C7.01 14 5 11.99 5 9.5S7.01 5 9.5 5 14 7.01 14 9.5 11.99 14 9.5 14zM7 9h5v1H7z"/></svg></div>
<div class="pill" style="left:190.5px;width:80.2px"><svg style="left:7.3px;top:8.0px" width="24" height="24" viewBox="0 0 24 24" fill="#b9b7b8"><path d="M12.5 8c-2.65 0-5.05.99-6.9 2.6L2 7v9h9l-3.62-3.62c1.39-1.16 3.16-1.88 5.12-1.88 3.54 0 6.55 2.31 7.6 5.5l2.37-.78C21.08 11.03 17.15 8 12.5 8z"/></svg><svg style="left:48.6px;top:8.0px" width="24" height="24" viewBox="0 0 24 24" fill="#b9b7b8"><path d="M12 8l-6 6 1.41 1.41L12 10.83l4.59 4.58L18 14z"/></svg></div>
<div class="pill" style="left:285.7px;width:39.0px"><div style="position:absolute;left:7.3px;top:8px;width:24px;height:24px;border-radius:12px;background:#d6d4d5"></div><svg style="left:10.3px;top:10.5px" width="18" height="18" viewBox="0 0 24 24" fill="#333"><path d="M12 2L4.5 20.29l.71.71L12 18l6.79 3 .71-.71z"/></svg></div>
<div class="pill" style="left:339.7px;width:115.1px"><svg style="left:8.3px;top:8.0px" width="24" height="24" viewBox="0 0 24 24" fill="#333"><path d="M19.93 8.35l-3.6 1.68L14 7.7V6.3l2.33-2.33 3.6 1.68c.38.18.82.01 1-.36.18-.38.01-.82-.36-1l-3.92-1.83c-.38-.18-.83-.1-1.13.2L13.78 4.4c-.18-.24-.46-.4-.78-.4-.55 0-1 .45-1 1v1H8.82C8.4 4.84 7.3 4 6 4 4.34 4 3 5.34 3 7c0 1.1.6 2.05 1.48 2.58L7.08 18H6c-1.1 0-2 .9-2 2v1h13v-1c0-1.1-.9-2-2-2h-1.62L8.41 8.77c.17-.24.31-.49.41-.77H12v1c0 .55.45 1 1 1 .32 0 .6-.16.78-.4l1.74 1.74c.3.3.75.38 1.13.2l3.92-1.83c.38-.18.54-.62.36-1-.18-.37-.62-.54-1-.36zM6 8c-.55 0-1-.45-1-1s.45-1 1-1 1 .45 1 1-.45 1-1 1z"/></svg><span style="left:37.1px">GoMouse</span></div>
<div class="pill" style="left:473.2px;width:175.5px"><svg style="left:8.0px;top:8.0px" width="24" height="24" viewBox="0 0 24 24" fill="#333"><path d="M3 17v2h6v-2H3zM3 5v2h10V5H3zm10 16v-2h8v-2h-8v-2h-2v6h2zM7 9v2H3v2h4v2h2V9H7zm14 4v-2H11v2h10zm-6-4h2V7h4V5h-4V3h-2v6z"/></svg><span style="left:37.0px;letter-spacing:-0.12px">LinearSpeed</span><svg style="left:144.7px;top:8.5px" width="23" height="23" viewBox="0 0 24 24" fill="#333"><path d="M19.81 14.99l1.19-.92-1.43-1.43-1.19.92 1.43 1.43zm-.45-4.72L21 9l-9-7-2.91 2.27 7.87 7.88 2.4-1.88zM3.27 1L2 2.27l4.22 4.22L3 9l1.63 1.27L12 16l2.1-1.63 1.43 1.43L12 18.54l-7.37-5.73L3 14.07l9 7 4.95-3.85L20.73 21 22 19.73 3.27 1z"/></svg></div>
<div class="pill" style="left:1340px;width:39.5px"><svg style="left:8.0px;top:8.0px" width="24" height="24" viewBox="0 0 24 24" fill="#333"><path d="M11 18h2v-2h-2v2zm1-16C6.48 2 2 6.48 2 12s4.48 10 10 10 10-4.48 10-10S17.52 2 12 2zm0 18c-4.41 0-8-3.59-8-8s3.59-8 8-8 8 3.59 8 8-3.59 8-8 8zm0-14c-2.21 0-4 1.79-4 4h2c0-1.1.9-2 2-2s2 .9 2 2c0 2-3 1.75-3 5h2c0-2.25 3-2.5 3-5 0-2.21-1.79-4-4-4z"/></svg></div>

</body>
</html>
